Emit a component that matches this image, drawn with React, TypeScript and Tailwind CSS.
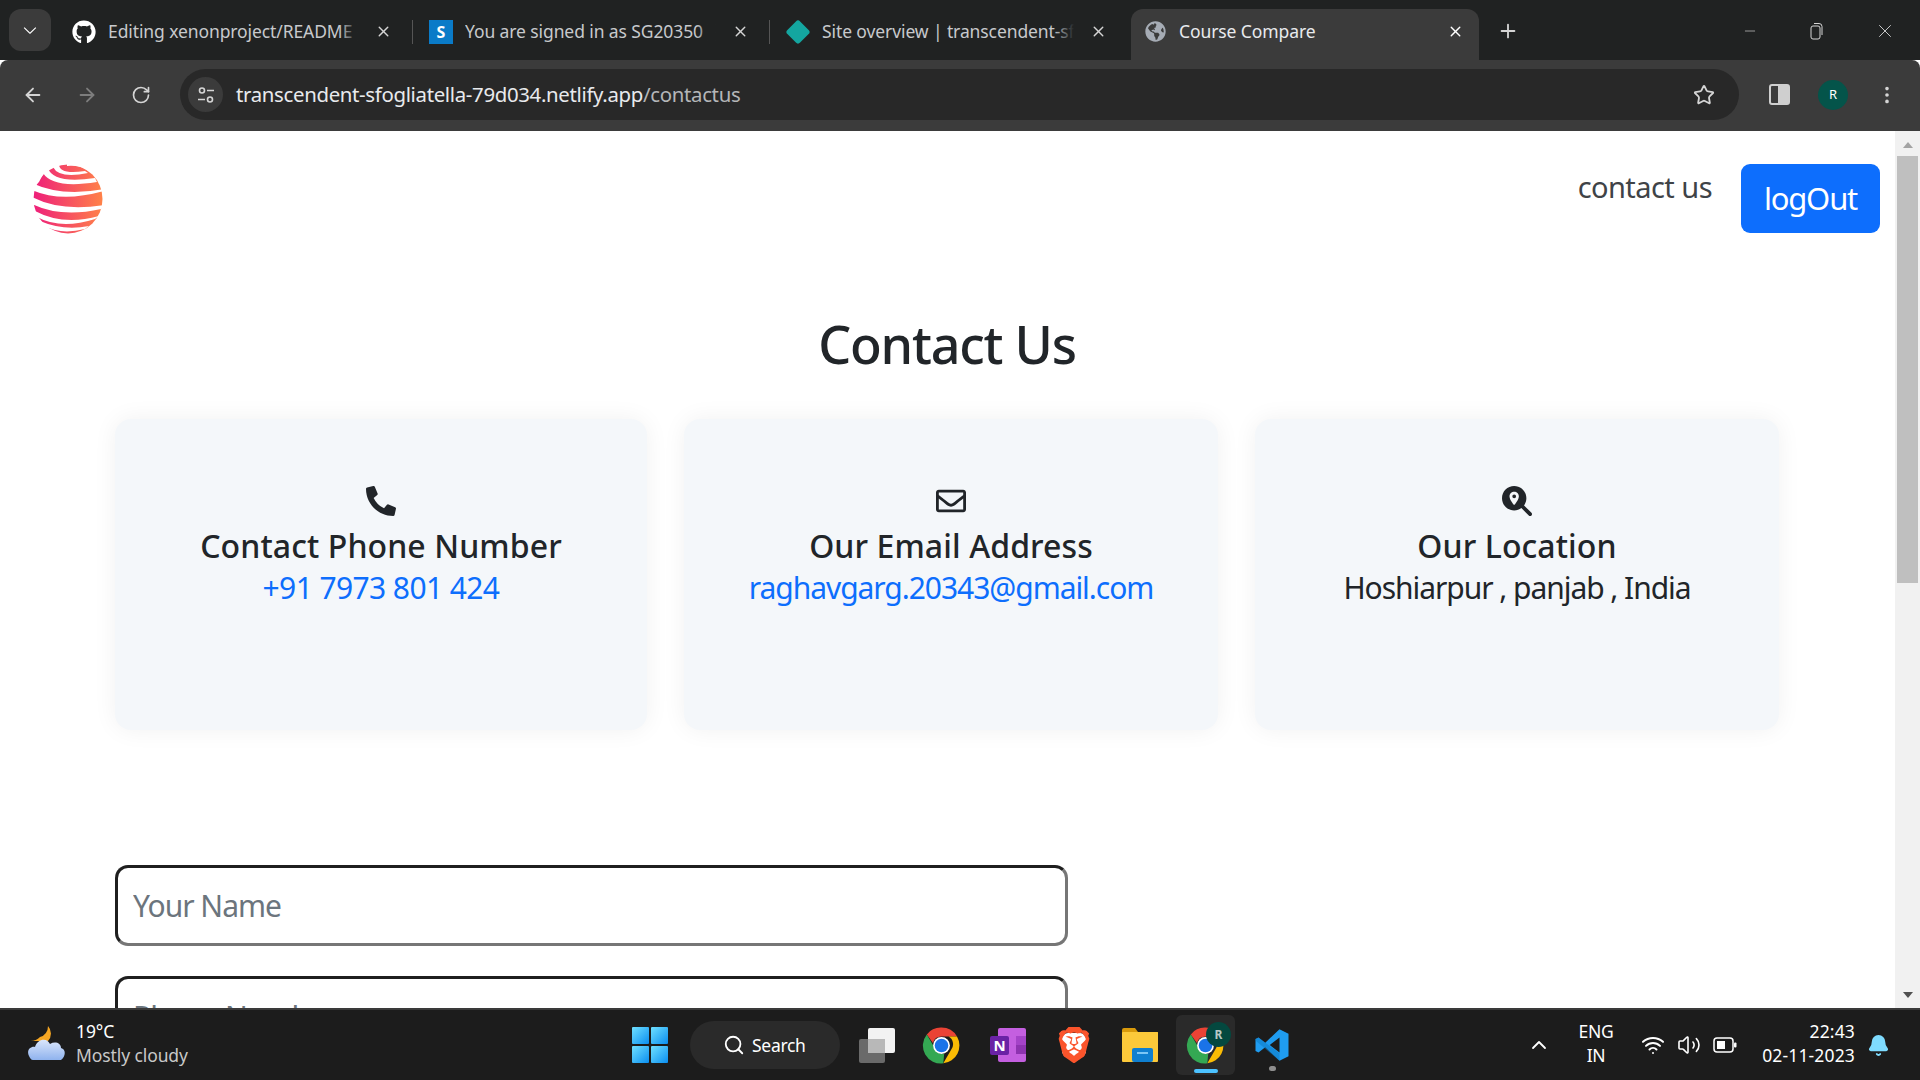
import React from 'react';
import { FaGithub, FaPhoneAlt, FaRegEnvelope, FaGlobeAmericas } from 'react-icons/fa';
import { FaMagnifyingGlassLocation } from 'react-icons/fa6';
import { SiBrave } from 'react-icons/si';
import { VscChevronDown } from 'react-icons/vsc';
import {
  ArrowLeft, ArrowRight, RotateCw, Star, MoreVertical, X, Plus, Minus, Search, ChevronUp, Wifi, Volume2, Bell,
} from 'lucide-react';

const ChromeIcon = ({ size = 36 }: { size?: number }) => (
  <svg width={size} height={size} viewBox="0 0 48 48">
    <path d="M24 4a20 20 0 0 1 17.3 10H24a10 10 0 0 0-9.6 7.2L7.6 11.6A20 20 0 0 1 24 4z" fill="#ea4335" />
    <path d="M41.3 14A20 20 0 0 1 26 43.9l8.6-14.9A10 10 0 0 0 32 14z" fill="#fbbc04" />
    <path d="M26 43.9A20 20 0 0 1 7.6 11.6l8.7 15A10 10 0 0 0 27 33.5z" fill="#34a853" />
    <circle cx="24" cy="24" r="9.4" fill="#fff" />
    <circle cx="24" cy="24" r="7.6" fill="#1a73e8" />
  </svg>
);

const Logo = () => (
  <svg width="70" height="70" viewBox="0 0 70 70">
    <defs>
      <linearGradient id="sphere" x1="0" x2="1" y1="0" y2="0">
        <stop offset="0" stopColor="#ee1f7a" />
        <stop offset="1" stopColor="#ff8248" />
      </linearGradient>
    </defs>
    <circle cx="35" cy="35" r="34.5" fill="url(#sphere)" />
    <g fill="#fff">
      <path d="M-1 19Q28 33 71 25L71 27Q28 39 -1 26Z" />
      <path d="M-1 33Q28 48 71 41L68 45Q28 54 -1 40Z" />
      <path d="M2 47Q30 62 66 52L62 55Q28 66 4 53Z" />
      <path d="M7 57Q30 67 56 62L52 65Q28 71 11 62Z" />
      <path d="M15 4Q20 20 62 14L64 18Q20 25 10 9Z" />
      <path d="M26 0Q26 11 52 7L55 9Q26 15 20 3Z" />
      <path d="M0 0H24Q12 3 6 18L0 24Z" />
      <path d="M34 -1H70V24L66 18Q62 9 54 6 46 1 34 2Z" />
    </g>
  </svg>
);

const tabs = [
  { title: 'Editing xenonproject/README', icon: <FaGithub size={24} className="text-white" />, divider: true },
  {
    title: 'You are signed in as SG20350',
    icon: <span className="flex h-6 w-6 items-center justify-center bg-[#0a7bc8] text-base font-bold text-white">S</span>,
    divider: true,
  },
  {
    title: 'Site overview | transcendent-sf',
    icon: <span className="h-[18px] w-[18px] rotate-45 rounded-[3px] bg-[#14a6a0]" />,
    divider: false,
  },
];

const Tab = ({ title, icon, divider }: { title: string; icon: React.ReactNode; divider: boolean }) => (
  <div className="flex h-[51px] w-[357px] items-center pl-4">
    <div className="flex w-[24px] shrink-0 items-center justify-center">{icon}</div>
    <div className="relative ml-3 w-[252px] overflow-hidden whitespace-nowrap text-[17.5px] tracking-[-0.1px] text-[#c7c9cc]">
      {title}
      <div className="absolute inset-y-0 right-0 w-[20px] bg-gradient-to-l from-[#202222]" />
    </div>
    <X size={17} className="ml-4 shrink-0 text-[#d5d5d5]" />
    {divider && <span className="ml-[20px] h-[24px] w-px shrink-0 bg-[#555]" />}
  </div>
);

const InfoCard = ({
  icon,
  title,
  children,
  width,
}: {
  icon: React.ReactNode;
  title: string;
  children: React.ReactNode;
  width: string;
}) => (
  <div className={`flex h-[311px] flex-col items-center rounded-2xl bg-[#f4f7fa] pt-[67px] shadow-[0_0_24px_rgba(0,0,0,0.06)] ${width}`}>
    <div className="flex h-[30px] items-center text-[#212529]">{icon}</div>
    <h3 className="mt-[8px] text-[32px] font-medium leading-[44px] tracking-[0.1px] text-[#212529]">{title}</h3>
    <div className="text-[30px] leading-[40px]">{children}</div>
  </div>
);

export default function App() {
  return (
    <div className="flex h-screen w-full flex-col overflow-hidden bg-white font-['Noto_Sans',sans-serif]">
      {/* Tab strip */}
      <div className="flex h-[60px] shrink-0 items-end bg-[#202222]">
        <div className="mb-[9px] ml-[9px] flex h-[42px] w-[42px] items-center justify-center rounded-xl bg-[#3b3b3b] text-white">
          <VscChevronDown size={20} />
        </div>
        <div className="ml-[5px] flex self-start pt-[6px]">
          {tabs.map((t) => (
            <Tab key={t.title} title={t.title} icon={t.icon} divider={t.divider} />
          ))}
        </div>
        <div className="ml-[4px] flex h-[51px] w-[348px] items-center rounded-t-xl bg-[#3b3b3b] pb-[6px] pl-[14px] pr-[15px]">
          <FaGlobeAmericas size={21} className="text-[#a6acb5]" />
          <span className="ml-[13px] text-[17.5px] tracking-[-0.1px] text-[#e8eaed]">Course Compare</span>
          <X size={17} className="ml-auto text-white" />
        </div>
        <Plus size={22} className="mb-[18px] ml-[18px] text-[#d5d5d5]" />
        <div className="mb-[18px] ml-auto flex items-center gap-[50px] pr-[24px] text-[#d5d5d5]">
          <Minus size={16} strokeWidth={1} />
          <svg width="16" height="18" viewBox="0 0 16 18" fill="none" stroke="currentColor">
            <rect x="3" y="4" width="9" height="13" rx="2" />
            <path d="M6 1.5h5a3 3 0 0 1 3 3V13" />
          </svg>
          <X size={22} strokeWidth={1} />
        </div>
      </div>

      {/* Toolbar */}
      <div className="flex h-[71px] shrink-0 items-center rounded-t-lg bg-[#3b3b3b] pb-[2px] text-[#d5d5d5]">
        <ArrowLeft size={22} className="ml-[22px]" />
        <ArrowRight size={22} className="ml-[32px] text-[#7d7d7d]" />
        <RotateCw size={20} className="ml-[33px]" />
        <div className="ml-[29px] flex h-[51px] w-[1559px] items-center rounded-full bg-[#282828] pl-[8px] pr-[24px]">
          <div className="flex h-[35px] w-[35px] items-center justify-center rounded-full bg-[#3b3b3b]">
            <svg width="18" height="18" viewBox="0 0 18 18" fill="none" stroke="#d5d5d5" strokeWidth="1.6">
              <circle cx="5" cy="4.5" r="2.5" />
              <path d="M10 4.5h7M1 13.5h7" />
              <circle cx="13" cy="13.5" r="2.5" />
            </svg>
          </div>
          <span className="ml-[13px] text-[20.4px] tracking-[-0.33px] text-[#e8eaed]">
            transcendent-sfogliatella-79d034.netlify.app<span className="text-[#b4b6b8]">/contactus</span>
          </span>
          <Star size={22} strokeWidth={2} className="ml-auto text-[#d5d5d5]" />
        </div>
        <div className="ml-[30px] flex h-[21px] w-[21px] justify-end rounded-[3px] border-2 border-[#cfcfcf]">
          <div className="h-full w-[10px] bg-[#cfcfcf]" />
        </div>
        <div className="ml-[28px] flex h-[30px] w-[30px] items-center justify-center rounded-full bg-[#04544a] text-[13px] text-white">
          R
        </div>
        <MoreVertical size={22} className="ml-[28px]" />
      </div>

      {/* Page */}
      <div className="flex min-h-0 flex-1">
        <div className="min-w-0 flex-1 overflow-hidden">
          <nav className="flex items-start pl-[33px] pr-[15px] pt-[33px]">
            <Logo />
            <span className="ml-auto mt-[1px] text-[29px] leading-[44px] tracking-[-0.55px] text-[#3f4347]">contact us</span>
            <button className="ml-[29px] h-[69px] w-[139px] rounded-[9px] bg-[#0d6efd] text-[31px] tracking-[-1.2px] text-white">
              logOut
            </button>
          </nav>

          <h1 className="mt-[74px] pr-[1px] text-center text-[52px] font-medium leading-[72px] tracking-[-1.2px] text-[#212529]">
            Contact Us
          </h1>

          <div className="mt-[39px] flex gap-[37px] pl-[115px]">
            <InfoCard width="w-[532px]" title="Contact Phone Number" icon={<FaPhoneAlt size={30} />}>
              <a className="tracking-[-0.6px] text-[#0d6efd]">+91 7973 801 424</a>
            </InfoCard>
            <InfoCard width="w-[534px]" title="Our Email Address" icon={<FaRegEnvelope size={30} />}>
              <a className="tracking-[-1.05px] text-[#0d6efd]">raghavgarg.20343@gmail.com</a>
            </InfoCard>
            <InfoCard width="w-[524px]" title="Our Location" icon={<FaMagnifyingGlassLocation size={30} />}>
              <span className="tracking-[-1.05px] text-[#212529]">Hoshiarpur , panjab , India</span>
            </InfoCard>
          </div>

          <form className="ml-[115px] mt-[135px] flex w-[953px] flex-col gap-[30px]">
            {['Your Name', 'Phone Number'].map((p) => (
              <input
                key={p}
                placeholder={p}
                className="h-[81px] w-full rounded-[13px] border-[3px] border-b-[#767676] border-l-[#1f1f1f] border-r-[#767676] border-t-[#1f1f1f] px-[15px] text-[30px] tracking-[-1px] placeholder:text-[#6c757d]"
              />
            ))}
          </form>
        </div>

        {/* Scrollbar */}
        <div className="flex w-[25px] shrink-0 flex-col items-center bg-[#f1f1f1] pt-[11px]">
          <div className="h-0 w-0 border-x-[5px] border-b-[6px] border-x-transparent border-b-[#a3a3a3]" />
          <div className="mt-[8px] h-[427px] w-[21px] bg-[#bfbfbf]" />
          <div className="mb-[10px] mt-auto h-0 w-0 border-x-[5px] border-t-[6px] border-x-transparent border-t-[#505050]" />
        </div>
      </div>

      {/* Taskbar */}
      <div className="flex h-[72px] shrink-0 items-center border-t-2 border-[#3a3a3a] bg-[#1c1c1c] text-white">
        <svg width="38" height="38" viewBox="0 0 38 38" className="ml-[28px]">
          <defs>
            <linearGradient id="cloud" x1="0" y1="0" x2="0" y2="1">
              <stop offset="0" stopColor="#dbe6fb" />
              <stop offset="1" stopColor="#8fb3ee" />
            </linearGradient>
          </defs>
          <path d="M20 0a11 11 0 0 1 0 15H2A13 13 0 0 0 12 11 11 11 0 0 0 20 0z" fill="#f5a623" />
          <path d="M1 30C-2 24 3 20 7 21 9 13 19 11 22 18 27 15 33 17 33 22 38 23 38 30 33 34H5C3 34 2 32 1 30z" fill="url(#cloud)" />
        </svg>
        <div className="ml-[10px] w-[150px] pb-[4px] text-[17.5px] leading-[24px] tracking-[-0.1px]">
          <div>19°C</div>
          <div className="text-[#c8c8c8]">Mostly cloudy</div>
        </div>

        <svg width="36" height="36" viewBox="0 0 36 36" className="ml-[406px]">
          <defs>
            <linearGradient id="win" x1="0" y1="0" x2="1" y2="1">
              <stop offset="0" stopColor="#6fe0ff" />
              <stop offset="1" stopColor="#0a8ef0" />
            </linearGradient>
          </defs>
          <rect x="0" y="0" width="17" height="17" rx="1" fill="url(#win)" />
          <rect x="19" y="0" width="17" height="17" rx="1" fill="url(#win)" />
          <rect x="0" y="19" width="17" height="17" rx="1" fill="url(#win)" />
          <rect x="19" y="19" width="17" height="17" rx="1" fill="url(#win)" />
        </svg>

        <div className="ml-[22px] flex h-[48px] w-[150px] items-center rounded-full bg-[#2a2a2a] pl-[33px] text-[17.5px] tracking-[-0.3px]">
          <Search size={22} />
          <span className="ml-[7px]">Search</span>
        </div>

        <svg width="36" height="36" viewBox="0 0 36 36" className="ml-[19px]">
          <rect x="0" y="12" width="26" height="24" rx="2" fill="#6a6a6a" />
          <rect x="9" y="1" width="27" height="25" rx="2" fill="#f2f2f2" />
          <rect x="9" y="12" width="17" height="14" fill="#b8b8b8" />
        </svg>

        <div className="ml-[25px]"><ChromeIcon size={43} /></div>

        <svg width="36" height="36" viewBox="0 0 36 36" className="ml-[27px]">
          <rect x="8" y="1" width="28" height="34" rx="2" fill="#c45fe0" />
          <rect x="26" y="9" width="10" height="9" fill="#a543c8" />
          <rect x="26" y="18" width="10" height="9" fill="#8e33b0" />
          <rect x="0" y="9" width="19" height="19" rx="2" fill="#6a22a5" />
          <text x="9.5" y="24" textAnchor="middle" fontSize="15" fontWeight="700" fill="#fff" fontFamily="'Noto Sans'">N</text>
        </svg>

        <div className="relative ml-[30px] h-[36px] w-[36px]">
          <div className="absolute inset-x-[6px] inset-y-[6px] rounded-md bg-white" />
          <SiBrave size={36} className="relative text-[#fb542b]" />
        </div>

        <svg width="36" height="36" viewBox="0 0 36 36" className="ml-[30px]">
          <path d="M0 3a2 2 0 0 1 2-2h11l3 4h20v6H0z" fill="#d99a0b" />
          <rect x="0" y="5" width="36" height="30" rx="1" fill="#fcc93a" />
          <rect x="10" y="21" width="21" height="14" rx="2" fill="#0f7fd0" />
          <rect x="15" y="25" width="11" height="2" fill="#7cc6f5" />
        </svg>

        <div className="relative ml-[18px] flex h-[60px] w-[59px] items-center justify-center rounded-md bg-[#2a2a2a]">
          <ChromeIcon size={43} />
          <div className="absolute right-[4px] top-[7px] flex h-[25px] w-[25px] items-center justify-center rounded-full bg-[#04483f] text-[12px] font-bold text-[#b8c8c4]">
            R
          </div>
          <div className="absolute bottom-[2px] left-[18px] h-[4px] w-[24px] rounded-full bg-[#4cc2ff]" />
        </div>

        <div className="relative ml-[19px]">
          <svg width="36" height="36" viewBox="0 0 24 24">
            <path d="M17 1.5 23 4.5V19.5L17 22.5 7.5 13.5 3 17 1 16V8L3 7 7.5 10.5z M17 7 10.5 12 17 17z" fill="#1f9cf0" fillRule="evenodd" />
            <path d="M1 8 3 7 17 17.5V22.5L1 9z" fill="#0c78c2" opacity="0.5" />
          </svg>
          <div className="absolute -bottom-[8px] left-[15px] h-[5px] w-[7px] rounded-full bg-[#8e8e8e]" />
        </div>

        <ChevronUp size={24} strokeWidth={1.8} className="ml-[237px]" />
        <div className="ml-[25px] w-[40px] pb-[4px] text-center text-[17.5px] leading-[24px] tracking-[-0.3px]">
          <div>ENG</div>
          <div>IN</div>
        </div>
        <Wifi size={24} className="ml-[25px]" />
        <Volume2 size={24} strokeWidth={1.6} className="ml-[12px]" />
        <svg width="24" height="16" viewBox="0 0 24 16" fill="none" className="ml-[12px]">
          <rect x="1" y="1" width="19" height="14" rx="3" stroke="#fff" strokeWidth="1.5" />
          <rect x="4" y="4" width="8" height="8" fill="#fff" />
          <rect x="21" y="5.5" width="2.5" height="5" rx="1" fill="#fff" />
        </svg>
        <div className="ml-auto pb-[4px] text-right text-[17.5px] leading-[24px] tracking-[0.15px]">
          <div>22:43</div>
          <div>02-11-2023</div>
        </div>
        <Bell size={23} fill="#7fdcff" stroke="#7fdcff" className="ml-[12px] mr-[30px]" />
      </div>
    </div>
  );
}
